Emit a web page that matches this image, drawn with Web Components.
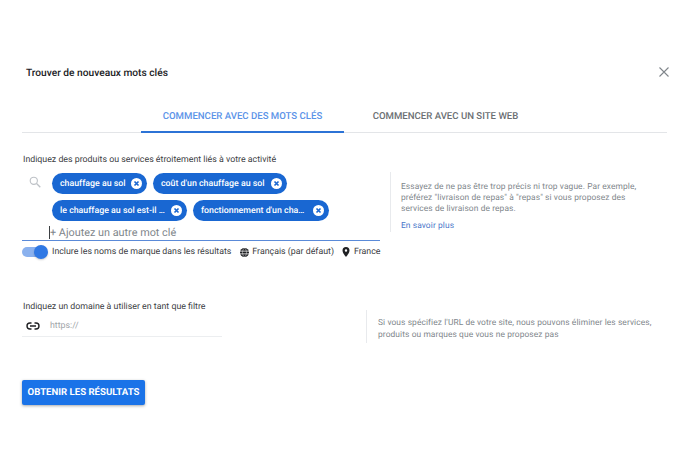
<!DOCTYPE html>
<html lang="fr">
<head>
<meta charset="utf-8">
<title>Trouver de nouveaux mots clés</title>
<style>
  html, body { margin: 0; background: #fff; }
  body {
    font-family: Roboto, "Liberation Sans", sans-serif;
    color: #3c4043;
    text-rendering: geometricPrecision;
  }
  .dots { letter-spacing: -.6px; }
</style>
</head>
<body>
<keyword-dialog></keyword-dialog>
<script>
class KeywordChip extends HTMLElement {
  constructor() {
    super()
    this.attachShadow({ mode: 'open' }).innerHTML = `
      <style>
        :host {
          align-items: center;
          background: #1967d2;
          border-radius: 11px;
          box-sizing: border-box;
          color: #fff;
          display: inline-flex;
          font-size: 8.8px;
          font-weight: 500;
          height: 21px;
          justify-content: space-between;
          padding: 0 5px 0 8px;
          white-space: nowrap;
        }
        svg { display: block; flex: none; margin-left: 4px; }
        .dots { letter-spacing: -.6px; }
      </style>
      <span><slot></slot><span class="dots"><slot name="dots"></slot></span></span>
      <svg width="11" height="11" viewBox="0 0 12 12">
        <circle cx="6" cy="6" r="6" fill="#fff"/>
        <path d="M3.8 3.8l4.4 4.4M8.2 3.8l-4.4 4.4" stroke="#1967d2" stroke-width="1.8" fill="none"/>
      </svg>
    `
  }
}
customElements.define('keyword-chip', KeywordChip)

class HintPanel extends HTMLElement {
  constructor() {
    super()
    this.attachShadow({ mode: 'open' }).innerHTML = `
      <style>
        :host {
          border-left: 1px solid #e8eaed;
          box-sizing: border-box;
          color: #80868b;
          display: block;
          font-size: 8.4px;
          letter-spacing: .1px;
          line-height: 11px;
          padding-left: 10px;
        }
        ::slotted(a) {
          color: #4a76c9;
          display: block;
          margin-top: 6px;
          text-decoration: none;
        }
      </style>
      <slot></slot>
    `
  }
}
customElements.define('hint-panel', HintPanel)

class BrandToggle extends HTMLElement {
  constructor() {
    super()
    this.attachShadow({ mode: 'open' }).innerHTML = `
      <style>
        :host { display: block; flex: none; height: 14px; position: relative; width: 26px; }
        .track {
          background: #8ab1ee;
          border-radius: 5px;
          height: 10px;
          margin-top: 2px;
          width: 25px;
        }
        .thumb {
          background: #2f78e4;
          border-radius: 50%;
          box-shadow: 0 1px 2px rgba(0,0,0,.2);
          height: 14px;
          position: absolute;
          right: 0;
          top: 0;
          width: 14px;
        }
      </style>
      <div class="track"></div>
      <div class="thumb"></div>
    `
  }
}
customElements.define('brand-toggle', BrandToggle)

class KeywordTabs extends HTMLElement {
  constructor() {
    super()
    this.attachShadow({ mode: 'open' }).innerHTML = `
      <style>
        :host {
          border-bottom: 1px solid #e3e5e8;
          display: flex;
          font-size: 9.6px;
          font-weight: 500;
          height: 33px;
          padding-left: 119px;
        }
        div { box-sizing: border-box; height: 34px; line-height: 35px; text-align: center; white-space: nowrap; }
        .active { border-bottom: 2px solid #2c73d6; color: #5b93e8; width: 203px; }
        .idle { color: #6b6f73; width: 203px; }
      </style>
      <div class="active">COMMENCER AVEC DES MOTS CLÉS</div>
      <div class="idle">COMMENCER AVEC UN SITE WEB</div>
    `
  }
}
customElements.define('keyword-tabs', KeywordTabs)

class KeywordDialog extends HTMLElement {
  constructor() {
    super()
    this.attachShadow({ mode: 'open' }).innerHTML = `
      <style>
        :host {
          box-sizing: border-box;
          display: block;
          height: 467px;
          padding: 65px 33px 0 22px;
          width: 700px;
        }
        header {
          align-items: center;
          display: flex;
          height: 14px;
          justify-content: space-between;
          margin-bottom: 20px;
          padding-left: 4px;
        }
        h1 { color: #202124; font-size: 10.2px; font-weight: 500; margin: 2px 0 0; }
        header svg { display: block; margin-right: -3px; }
        .label { color: #3c4043; font-size: 8.8px; line-height: 12px; padding-left: 1px; }
        .first { margin-top: 21px; }
        .keywords { display: flex; margin-top: 1px; }
        .editor { flex: none; width: 358px; }
        .search { align-items: flex-start; display: flex; padding-top: 6px; }
        .search svg { flex: none; margin: 3px 11px 0 7px; }
        .chips { display: flex; flex-wrap: wrap; gap: 6px; width: 300px; }
        .input {
          border-bottom: 1px solid #5a8ad8;
          color: #80868b;
          font-size: 10.85px;
          height: 17px;
          line-height: 19px;
          margin-top: 2px;
          padding-left: 27px;
        }
        .input span { border-left: 1px solid #3c4043; }
        .options {
          align-items: center;
          display: flex;
          font-size: 8.8px;
          height: 14px;
          margin-top: 4px;
          white-space: nowrap;
        }
        .options brand-toggle { margin-right: 4px; }
        .opt { align-items: center; display: flex; margin-left: 9px; }
        .opt svg { margin-right: 3px; }
        .opt.place { margin-left: 8px; }
        .opt.place svg { margin-right: 4px; }
        .keywords hint-panel { height: 60px; margin: 5px 0 0 10px; padding-top: 10px; width: 250px; }
        .second { margin-top: 42px; }
        .domain { display: flex; margin-top: 2px; }
        .url {
          align-items: center;
          border-bottom: 1px solid #eceef0;
          color: #a0a4a8;
          display: flex;
          flex: none;
          font-size: 8.8px;
          height: 21px;
          padding-left: 4px;
          width: 196px;
        }
        .url svg { margin-right: 10px; }
        .domain hint-panel { height: 33px; line-height: 12px; margin: -5px 0 0 144px; padding: 7px 0 0 11px; width: 295px; }
        button {
          background: #1a73e8;
          border: 0;
          border-radius: 2px;
          box-shadow: 0 1px 3px rgba(60,64,67,.45);
          color: #fff;
          display: block;
          font: 700 9.6px Roboto, sans-serif;
          height: 25px;
          margin-top: 37px;
          padding: 0;
          text-rendering: geometricPrecision;
          width: 123px;
        }
      </style>
      <header>
        <h1>Trouver de nouveaux mots clés</h1>
        <svg width="12" height="12" viewBox="0 0 12 12"><path d="M1.5 1.5l9 9M10.5 1.5l-9 9" stroke="#80868b" stroke-width="1.1" fill="none"/></svg>
      </header>
      <keyword-tabs></keyword-tabs>
      <div class="label first">Indiquez des produits ou services étroitement liés à votre activité</div>
      <div class="keywords">
        <div class="editor">
          <div class="search">
            <svg width="12" height="12" viewBox="0 0 12 12"><circle cx="4.8" cy="4.8" r="3.6" stroke="#bdc1c6" stroke-width="1.1" fill="none"/><path d="M7.5 7.5l3.8 3.8" stroke="#bdc1c6" stroke-width="1.3"/></svg>
            <div class="chips">
              <keyword-chip style="width:95px">chauffage au sol</keyword-chip>
              <keyword-chip style="width:134px">coût d'un chauffage au sol</keyword-chip>
              <keyword-chip style="width:135px">le chauffage au sol est-il <span slot="dots">...</span></keyword-chip>
              <keyword-chip style="width:136px">fonctionnement d'un cha<span slot="dots">...</span></keyword-chip>
            </div>
          </div>
          <div class="input"><span>+ Ajoutez un autre mot clé</span></div>
          <div class="options">
            <brand-toggle></brand-toggle>
            <span>Inclure les noms de marque dans les résultats</span>
            <span class="opt"><svg width="9" height="9" viewBox="0 0 10 10"><circle cx="5" cy="5" r="5" fill="#202124"/><path d="M0 3.5h10M0 6.5h10" stroke="#fff" stroke-width=".8"/><ellipse cx="5" cy="5" rx="2.2" ry="4.6" stroke="#fff" stroke-width=".5" fill="none"/></svg>Français (par défaut)</span>
            <span class="opt place"><svg width="8" height="10" viewBox="0 0 8 10"><path fill-rule="evenodd" d="M4 0a3.5 3.5 0 0 0-3.5 3.5C.5 6 4 10 4 10s3.5-4 3.5-6.5A3.5 3.5 0 0 0 4 0zm0 2.3a1.2 1.2 0 1 1 0 2.4 1.2 1.2 0 0 1 0-2.4z" fill="#202124"/></svg>France</span>
          </div>
        </div>
        <hint-panel>Essayez de ne pas être trop précis ni trop vague. Par exemple, préférez "livraison de repas" à "repas" si vous proposez des services de livraison de repas.<a href="#">En savoir plus</a></hint-panel>
      </div>
      <div class="label second">Indiquez un domaine à utiliser en tant que filtre</div>
      <div class="domain">
        <div class="url">
          <svg width="14" height="8" viewBox="0 0 14 8"><path d="M5.5 1H4a3 3 0 0 0 0 6h1.5M8.5 1H10a3 3 0 0 1 0 6H8.5M4 4h6" stroke="#202124" stroke-width="1.4" fill="none"/></svg>
          https://
        </div>
        <hint-panel>Si vous spécifiez l'URL de votre site, nous pouvons éliminer les services, produits ou marques que vous ne proposez pas</hint-panel>
      </div>
      <button>OBTENIR LES RÉSULTATS</button>
    `
  }
}
customElements.define('keyword-dialog', KeywordDialog)
</script>
</body>
</html>
